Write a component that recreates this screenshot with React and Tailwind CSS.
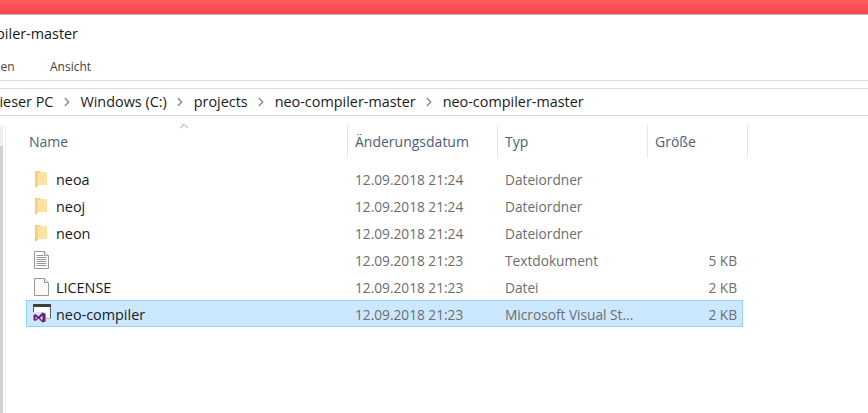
import { ChevronRight, ChevronUp } from 'lucide-react'

const CRUMBS = ['Windows (C:)', 'projects', 'neo-compiler-master', 'neo-compiler-master']

const COLUMNS = [
  { label: 'Name', width: 'w-[322px]', pad: 'pl-[3px]' },
  { label: 'Änderungsdatum', width: 'w-[150px]', pad: 'pl-[7px]' },
  { label: 'Typ', width: 'w-[150px]', pad: 'pl-[7px]' },
  { label: 'Größe', width: 'w-[100px]', pad: 'pl-[7px]' },
]

const FILES = [
  { name: 'neoa', icon: 'folder', date: '12.09.2018 21:24', type: 'Dateiordner', size: '' },
  { name: 'neoj', icon: 'folder', date: '12.09.2018 21:24', type: 'Dateiordner', size: '' },
  { name: 'neon', icon: 'folder', date: '12.09.2018 21:24', type: 'Dateiordner', size: '' },
  { name: '', icon: 'text', date: '12.09.2018 21:23', type: 'Textdokument', size: '5 KB' },
  { name: 'LICENSE', icon: 'file', date: '12.09.2018 21:23', type: 'Datei', size: '2 KB' },
  { name: 'neo-compiler', icon: 'vs', date: '12.09.2018 21:23', type: 'Microsoft Visual St...', size: '2 KB', selected: true },
]

function FolderIcon() {
  return (
    <svg width="12" height="18" viewBox="0 0 12 18" className="mr-[3px]">
      <path d="M0 1h3v15l-2 1.500-1-.5z" fill="#f0cf80" />
      <path d="M2 1h3l1 1.500h6v12.500H2z" fill="#f6d688" />
      <path d="M3 3h9v12H3z" fill="#fde39f" />
    </svg>
  )
}

function TextFileIcon() {
  return (
    <svg width="15" height="18" viewBox="0 0 15 18" className="mr-[1px]">
      <path d="M.500.500h10l4 4v13H.500z" fill="#fff" stroke="#9a9a9a" />
      <path d="M10.500.500v4h4" fill="#eee" stroke="#9a9a9a" />
      <path d="M2.500 4.500h7M2.500 6.500h10M2.500 8.500h10M2.500 10.500h10M2.500 12.500h10M2.500 14.500h10" stroke="#969696" />
    </svg>
  )
}

function BlankFileIcon() {
  return (
    <svg width="15" height="18" viewBox="0 0 15 18" className="mr-[1px]">
      <path d="M.500.500h10l4 4v13H.500z" fill="#fafafa" stroke="#9a9a9a" />
      <path d="M10.500.500v4h4" fill="#efefef" stroke="#9a9a9a" />
    </svg>
  )
}

function SolutionIcon() {
  return (
    <svg width="20" height="19" viewBox="0 0 20 19" className="ml-[-1px]">
      <rect x="1.500" y=".500" width="17" height="14" fill="#fff" stroke="#5a5a5a" />
      <rect x="1" y="0" width="18" height="3" fill="#3f3f3f" />
      <rect x="3" y="14" width="16" height="1" fill="#b5b5b5" />
      <rect x="1" y="8" width="13" height="11" fill="#cce8ff" />
      <path d="M1.500 11l2-1 3 2.500 4-4 3 1.500v7.500l-3 1-4-4-3 2.500-2-1z" fill="#68217a" />
      <path d="M3.500 12.500v3l1.700-1.500zM10.500 11.500l-2.600 2.500 2.600 2.500z" fill="#e8d9ee" />
    </svg>
  )
}

const ICONS = { folder: FolderIcon, text: TextFileIcon, file: BlankFileIcon, vs: SolutionIcon }

function FileRow({ file }) {
  const Icon = ICONS[file.icon]
  return (
    <div
      className={`flex h-[27px] w-[717px] items-center border pt-[1px] ${
        file.selected ? 'border-[#99d1ff] bg-[#cce8ff]' : 'border-transparent'
      }`}
    >
      <div className="flex w-[320px] items-center">
        <div className="flex w-[29px] shrink-0 justify-center pl-[1px]">
          <Icon />
        </div>
        <span className="mt-[2px] text-[14.4px] text-[#1a1a1a]">{file.name}</span>
      </div>
      <div className="mt-[2px] w-[150px] pl-[8px] text-[#6d6d6d]">{file.date}</div>
      <div className="mt-[2px] w-[150px] pl-[8px] text-[#6d6d6d]">{file.type}</div>
      <div className="mt-[2px] w-[90px] text-right text-[#6d6d6d]">{file.size}</div>
    </div>
  )
}

export default function App() {
  return (
    <div className="h-[413px] w-[868px] overflow-hidden bg-white font-['Open_Sans','Noto_Sans',sans-serif] text-[13.7px]">
      {/* Title bar */}
      <div className="h-[15px] border-b border-[#b9b9b9] bg-gradient-to-b from-[#ff5a5f] to-[#f9454a]" />
      <div className="ml-[-63px] flex h-[37px] items-center text-[14.4px] whitespace-nowrap text-[#1a1a1a]">
        neo-compiler-master
      </div>

      {/* Ribbon tabs */}
      <div className="flex h-[29px] items-center border-b border-[#dcdcdc] pt-[1px] text-[12px] text-[#444]">
        <span className="ml-[-41px] w-[91px]">Freigeben</span>
        <span>Ansicht</span>
      </div>

      {/* Address bar */}
      <div className="mt-[7px] flex h-[28px] items-center border-y border-[#d9d9d9] text-[14.4px] whitespace-nowrap text-[#1a1a1a]">
        <span className="ml-[-11px]">Dieser PC</span>
        {CRUMBS.map((crumb, index) => (
          <div key={index} className="flex items-center">
            <ChevronRight className="mx-[6.5px] h-[14px] w-[14px] text-[#8a8a8a]" strokeWidth={2.5} />
            <span>{crumb}</span>
          </div>
        ))}
      </div>

      <div className="flex">
        {/* Edge of the navigation pane */}
        <div className="mt-[9px] w-[26px] shrink-0">
          <div className="h-[21px] w-[6px] border-r border-[#f0f0f0]">
            <div className="h-full w-[3px] bg-[#efefef]" />
          </div>
          <div className="h-[267px] w-[6px] border-r border-[#f0f0f0]">
            <div className="h-full w-[3px] bg-[#d2d2d2]" />
          </div>
        </div>
        <div>
          {/* Column headers */}
          <div className="relative mt-[9px] flex h-[33px] text-[14px] text-[#4c607a]">
            <ChevronUp className="absolute top-[-6px] left-[151px] h-[14px] w-[14px] text-[#8a8a8a]" strokeWidth={1.5} />
            {COLUMNS.map((column) => (
              <div
                key={column.label}
                className={`flex items-center border-r border-[#e5e5e5] ${column.width} ${column.pad}`}
              >
                {column.label}
              </div>
            ))}
          </div>

          {/* Files */}
          <div className="mt-[7px]">
            {FILES.map((file, index) => (
              <FileRow key={index} file={file} />
            ))}
          </div>
        </div>
      </div>
    </div>
  )
}
